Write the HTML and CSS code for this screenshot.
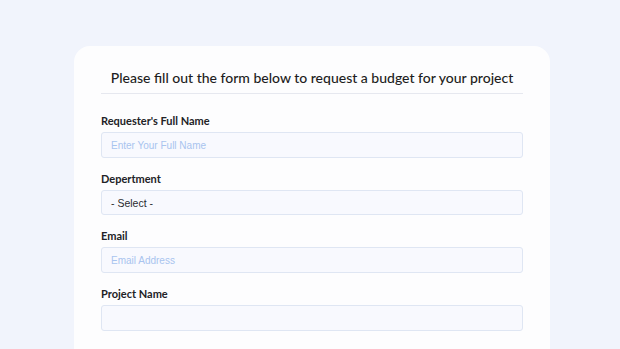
FILE: index.html
```html
<!DOCTYPE html>
<html lang="en">
<head>
  <meta charset="UTF-8">
  <meta name="viewport" content="width=device-width, initial-scale=1.0">
  <title>Budget Request</title>
  <link rel="stylesheet" href="styles.css">
</head>
<body>

<div class="card">
  <h1 class="form-title">Please fill out the form below to request a budget for your project</h1>

  <form class="budget-form">
    <div class="field">
      <label for="fullName">Requester's Full Name</label>
      <input type="text" id="fullName" placeholder="Enter Your Full Name">
    </div>

    <div class="field">
      <label for="department">Depertment</label>
      <div class="select-box" id="department">- Select -</div>
    </div>

    <div class="field">
      <label for="email">Email</label>
      <input type="email" id="email" placeholder="Email Address">
    </div>

    <div class="field">
      <label for="projectName">Project Name</label>
      <input type="text" id="projectName">
    </div>
  </form>
</div>

</body>
</html>
```

FILE: styles.css
```css
body {
  margin: 0;
  padding: 46px 0 0;
  background-color: #f1f4fc;
  font-family: 'Lato', 'Noto Sans', sans-serif;
  color: #1d1d22;
  overflow: hidden;
}

.card {
  width: 422px;
  margin-left: 74px;
  padding: 22px 27px 40px;
  background-color: #fdfdfe;
  border-radius: 16px;
}

.form-title {
  margin: 0;
  padding-bottom: 6px;
  border-bottom: 1px solid #e6e8ef;
  font-size: 14px;
  font-weight: 500;
  text-align: center;
  line-height: 19px;
}

.budget-form {
  display: flex;
  flex-direction: column;
  gap: 14px;
  margin-top: 20px;
}

.field {
  display: flex;
  flex-direction: column;
  gap: 4px;
}

.field label {
  font-size: 11px;
  font-weight: 700;
  line-height: 14px;
  color: #222226;
}

.field input,
.select-box {
  box-sizing: border-box;
  width: 100%;
  height: 26px;
  margin: 0;
  padding: 0 9px;
  background-color: #f8f9fe;
  border: 1px solid #dfe6f3;
  border-radius: 3px;
  font-family: 'Liberation Sans', Arial, sans-serif;
  font-size: 10px;
  outline: none;
}

.field input::placeholder {
  color: #a8c4ef;
}

.select-box {
  height: 25px;
  display: flex;
  align-items: center;
  font-size: 10.5px;
  color: #2a2a2e;
}
```
